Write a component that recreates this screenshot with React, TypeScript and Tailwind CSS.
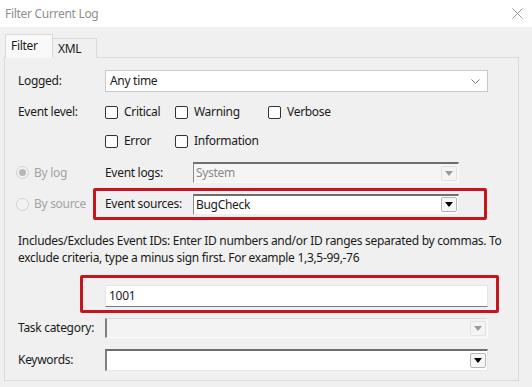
import React from "react";

const font = { fontFamily: '"Noto Sans", "Open Sans", sans-serif' };

function Tri({ muted }: { muted?: boolean }) {
  return (
    <svg width="8" height="5" viewBox="0 0 8 5">
      <path d="M0 0 H8 L4 5 Z" fill={muted ? "#9a9a9a" : "#000"} />
    </svg>
  );
}

// small dropdown button of the old style combo boxes
function DropBtn({ muted }: { muted?: boolean }) {
  return (
    <div
      className={
        "w-[16px] h-[15px] flex items-center justify-center rounded-[2px] border " +
        (muted ? "border-[#e2e2e2] bg-[#f4f4f4]" : "border-[#b5b5b5] bg-[#f6f6f6]")
      }
    >
      <Tri muted={muted} />
    </div>
  );
}

function Check({ label, w }: { label: string; w: string }) {
  return (
    <div className={"flex items-center " + w}>
      <div className="w-[13px] h-[13px] border border-[#333] rounded-[2px] bg-white" />
      <span className="ml-[6px] text-[12px] text-[#1a1a1a]">{label}</span>
    </div>
  );
}

function Radio({ label, checked }: { label: string; checked?: boolean }) {
  return (
    <div className="flex items-center w-[77px] shrink-0">
      <div className="w-[13px] h-[13px] rounded-full border border-[#cfcfcf] bg-[#f2f2f2] flex items-center justify-center">
        {checked && <div className="w-[7px] h-[7px] rounded-full bg-[#b8b8b8]" />}
      </div>
      <span className="ml-[5px] text-[12px] text-[#a3a3a3]">{label}</span>
    </div>
  );
}

export default function App() {
  return (
    <div
      className="w-[532px] h-[387px] bg-[#f0f0f0] overflow-hidden text-[12px] text-[#1a1a1a] tracking-[-0.3px]"
      style={font}
    >
      {/* title bar */}
      <div className="h-[27px] bg-white flex items-center justify-between pl-[5px] pr-[9px]">
        <span className="text-[12px] text-[#8f8f8f]">Filter Current Log</span>
        <svg width="11" height="11" viewBox="0 0 11 11">
          <path d="M0.5 0.5 L10.5 10.5 M10.5 0.5 L0.5 10.5" stroke="#9a9a9a" strokeWidth="1" />
        </svg>
      </div>

      {/* tabs */}
      <div className="flex items-end pl-[5px] pt-[7px] h-[31px]">
        <div className="w-[48px] h-[24px] bg-[#f9f9f9] border border-b-0 border-[#dadada] pl-[5px] pt-[2px] relative z-10">
          Filter
        </div>
        <div className="w-[44px] h-[20px] bg-[#f0f0f0] border border-l-0 border-b-0 border-[#dadada] pl-[5px] leading-[20px]">
          XML
        </div>
      </div>

      {/* panel */}
      <div className="ml-[4px] w-[515px] h-[324px] border border-[#dadada] -mt-px">
        {/* Logged */}
        <div className="mt-[12px] h-[22px] flex items-center pl-[13px]">
          <span className="w-[87px]">Logged:</span>
          <div className="w-[383px] h-[22px] bg-white border border-[#c9c9c9] flex items-center justify-between pl-[4px] pr-[7px]">
            <span>Any time</span>
            <svg width="9" height="5" viewBox="0 0 9 5">
              <path d="M0.5 0.5 L4.5 4.5 L8.5 0.5" fill="none" stroke="#777" strokeWidth="1" />
            </svg>
          </div>
        </div>

        {/* Event level */}
        <div className="mt-[10px] h-[20px] flex items-center pl-[13px]">
          <span className="w-[87px]">Event level:</span>
          <Check label="Critical" w="w-[70px]" />
          <Check label="Warning" w="w-[93px]" />
          <Check label="Verbose" w="w-[80px]" />
        </div>
        <div className="mt-[9px] h-[20px] flex items-center pl-[100px]">
          <Check label="Error" w="w-[70px]" />
          <Check label="Information" w="w-[93px]" />
        </div>

        {/* By log */}
        <div className="mt-[11px] h-[21px] flex items-center pl-[11px]">
          <Radio label="By log" checked />
          <div className="w-[394px] h-[21px] border-x-[3px] border-transparent flex items-center pl-[9px]">
            <span className="w-[88px]">Event logs:</span>
            <div className="w-[266px] h-[21px] bg-[#f5f5f5] border-t-2 border-l border-t-[#6e6e6e] border-l-[#8a8a8a] border-r border-b border-r-[#fafafa] border-b-[#fafafa] flex items-center justify-between pl-[2px] pr-[1px]">
              <span className="text-[#8a8a8a]">System</span>
              <DropBtn muted />
            </div>
          </div>
        </div>

        {/* By source */}
        <div className="mt-[5px] h-[32px] flex items-center pl-[11px]">
          <Radio label="By source" />
          <div className="w-[394px] h-[32px] border-[3px] border-[#c4161c] rounded-[2px] flex items-center pl-[9px]">
            <span className="w-[88px]">Event sources:</span>
            <div className="w-[266px] h-[21px] bg-white border-t-2 border-l border-t-[#6e6e6e] border-l-[#8a8a8a] border-r border-b border-r-[#f0f0f0] border-b-[#f0f0f0] flex items-center justify-between pl-[2px] pr-[1px]">
              <span>BugCheck</span>
              <DropBtn />
            </div>
          </div>
        </div>

        {/* explanation */}
        <p className="mt-[12px] pl-[13px] pr-[10px] leading-[17px]">
          Includes/Excludes Event IDs: Enter ID numbers and/or ID ranges separated by commas. To exclude criteria, type a minus sign first. For example 1,3,5-99,-76
        </p>

        {/* Event IDs */}
        <div className="mt-[9px] ml-[75px] w-[419px] h-[38px] border-[3px] border-[#c4161c] rounded-[2px] pt-[7px] pl-[22px]">
          <div className="w-[383px] h-[22px] bg-white border border-[#e6e6e6] border-b-[#7a7a7a] flex items-center pl-[3px]">
            1001
          </div>
        </div>

        {/* Task category */}
        <div className="mt-[5px] h-[20px] flex items-center pl-[13px]">
          <span className="w-[87px]">Task category:</span>
          <div className="w-[383px] h-[20px] bg-[#f3f3f3] border-l-2 border-l-[#808080] border-t border-t-[#dcdcdc] border-r border-b border-r-[#fafafa] border-b-[#fafafa] flex items-center justify-end pr-[1px]">
            <DropBtn muted />
          </div>
        </div>

        {/* Keywords */}
        <div className="mt-[11px] h-[22px] flex items-center pl-[13px]">
          <span className="w-[87px]">Keywords:</span>
          <div className="w-[383px] h-[22px] bg-white border-t-2 border-l-2 border-t-[#6e6e6e] border-l-[#808080] border-r border-b border-r-[#e8e8e8] border-b-[#e8e8e8] flex items-center justify-end pr-[1px]">
            <DropBtn />
          </div>
        </div>
      </div>
    </div>
  );
}
